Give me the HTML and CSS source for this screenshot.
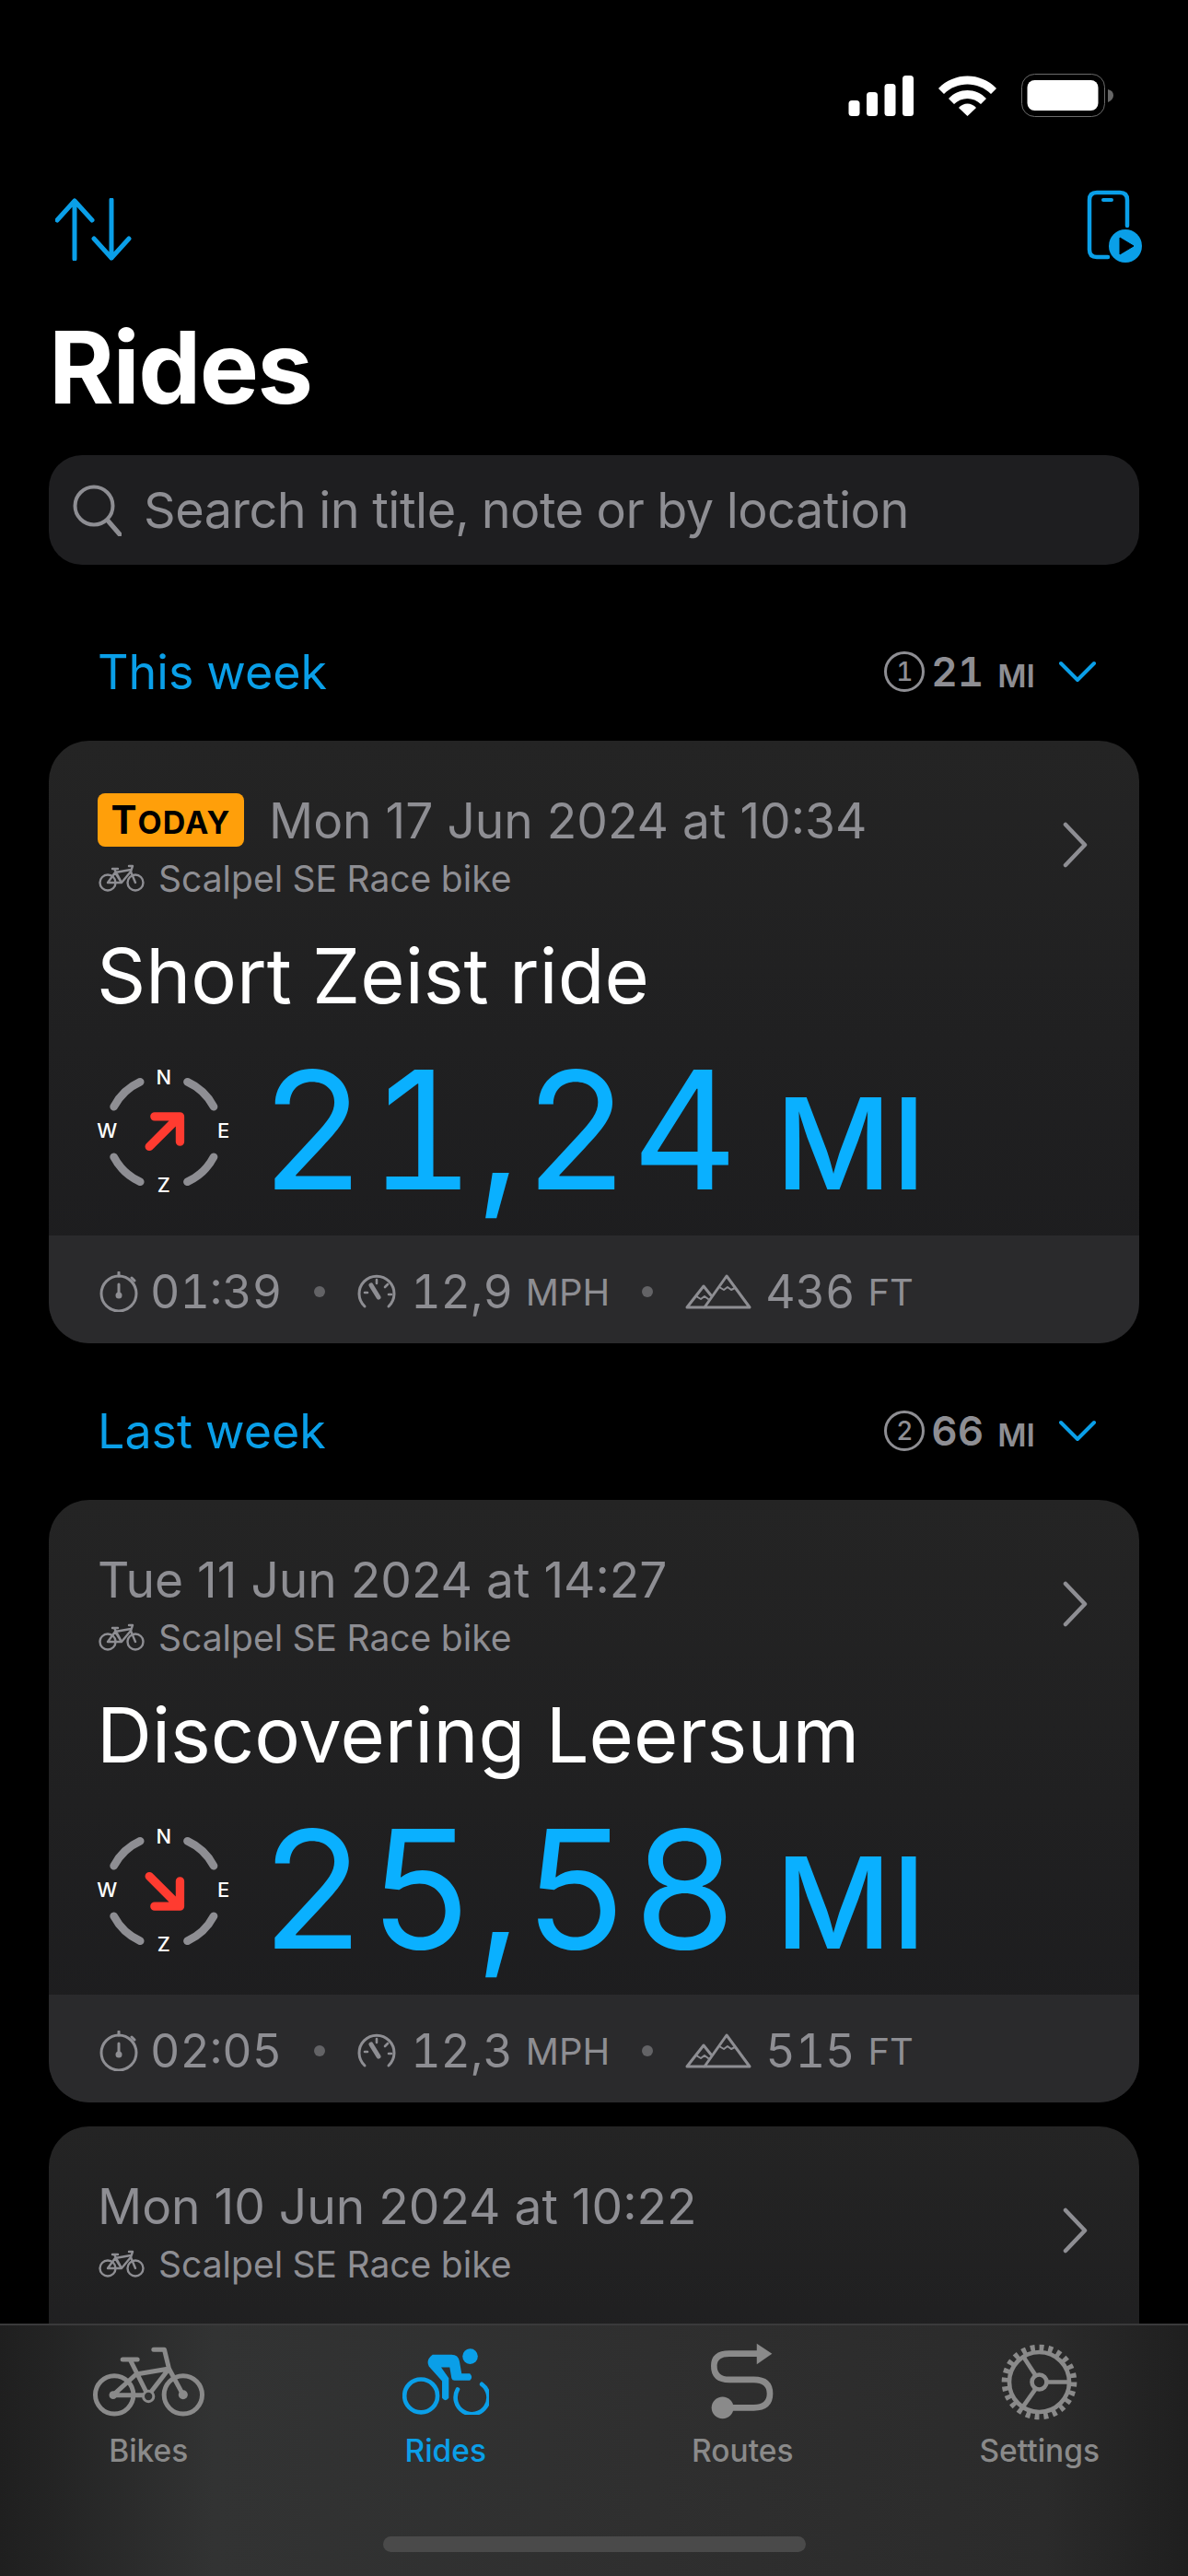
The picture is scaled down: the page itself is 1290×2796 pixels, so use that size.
FILE: index.html
```html
<!DOCTYPE html>
<html lang="en">
<head>
<meta charset="utf-8">
<title>Rides</title>
<link rel="stylesheet" href="styles.css">
</head>
<body>
<svg class="defs" width="0" height="0" aria-hidden="true">
  <defs>
    <symbol id="compass-ring" viewBox="190 70 460 440">
      <g fill="none" stroke="#8e8e93" stroke-width="26" stroke-linecap="round">
        <path d="M252 208A182 182 0 0 1 338 127"/>
        <path d="M492 127A182 182 0 0 1 578 208"/>
        <path d="M578 372A182 182 0 0 1 492 453"/>
        <path d="M338 453A182 182 0 0 1 252 372"/>
      </g>
    </symbol>
    <symbol id="small-bike" viewBox="0 0 50 30">
      <g fill="none" stroke="#8e8e93" stroke-width="2.4" stroke-linecap="round" stroke-linejoin="round">
        <circle cx="10" cy="20" r="8.5"/>
        <circle cx="40" cy="20" r="8.5"/>
        <path d="M10 20H25L35 8L40 20M10 20L18 9L25 20M18 9L35 6M15 5H21M17 5L25 20M33 2H37L35 8"/>
      </g>
    </symbol>
    <symbol id="stopwatch" viewBox="0 0 44 44">
      <g fill="none" stroke="#8e8e93" stroke-width="3" stroke-linecap="round">
        <circle cx="22" cy="24" r="19"/>
        <path d="M22 1V5M36 7L39 10M22 14V25"/>
      </g>
      <circle cx="22" cy="26" r="3.5" fill="#8e8e93"/>
    </symbol>
    <symbol id="gauge" viewBox="0 0 42 38">
      <g fill="none" stroke="#8e8e93" stroke-width="3" stroke-linecap="round">
        <path d="M8 35A19 19 0 1 1 34 35"/>
        <path d="M21 6V10M33 11L30 14M8 20H11M34 22H37" stroke-width="2.6"/>
        <path d="M15 12L23 25" stroke-width="5"/>
      </g>
    </symbol>
    <symbol id="peaks" viewBox="0 0 72 38">
      <g fill="none" stroke="#8e8e93" stroke-width="3" stroke-linejoin="round" stroke-linecap="round">
        <path d="M20 36H2L20 13L28 23"/>
        <path d="M21 36L45 2L70 36Z"/>
        <path d="M12 24L17 27L21 24L25 27M37 14L42 17L46 14L50 17L54 15" stroke-width="2"/>
      </g>
    </symbol>
    <symbol id="chev-right" viewBox="0 0 28 50">
      <path d="M3 3L24 25L3 47" fill="none" stroke="#8e8e93" stroke-width="4.5" stroke-linecap="round" stroke-linejoin="round"/>
    </symbol>
    <symbol id="chev-down" viewBox="0 0 40 24">
      <path d="M2 3L20 21L38 3" fill="none" stroke="#0a9fe8" stroke-width="4" stroke-linecap="round" stroke-linejoin="round"/>
    </symbol>
  </defs>
</svg>

<main class="screen">
  <div class="status">
    <svg class="sig" viewBox="0 0 70 44"><g fill="#fff"><rect x="0" y="27" width="12" height="17" rx="3.5"/><rect x="19.500" y="18" width="12" height="26" rx="3.500"/><rect x="39" y="9" width="12" height="35" rx="3.500"/><rect x="58.500" y="0" width="12" height="44" rx="3.500"/></g></svg>
    <svg class="wifi" viewBox="0 0 63 44"><g fill="#fff"><path d="M0 14C17-4 46-4 63 14L57 20C43 6 20 6 6 20Z"/><path d="M11 25C22 13 41 13 52 25L46 31C38 23 25 23 17 31Z"/><path d="M22 35C27 29 36 29 41 35L31.500 44Z"/></g></svg>
    <svg class="batt" viewBox="0 0 101 47"><rect x=".5" y=".5" width="90" height="46" rx="14" fill="none" stroke="#6b6b6b"/><rect x="6.500" y="7" width="77" height="33" rx="8" fill="#fff"/><path d="M94 17C98 18 100 20 100 23.500C100 27 98 29 94 31Z" fill="#666"/></svg>
  </div>

  <div class="nav">
    <svg class="sort" viewBox="0 0 83 68"><g fill="none" stroke="#0a9fe8" stroke-width="5" stroke-linecap="round" stroke-linejoin="round"><path d="M21 66V3M2 24L21 3L40 24"/><path d="M61 2V65M42 44L61 65L80 44"/></g></svg>
    <svg class="phone" viewBox="0 0 60 79"><path d="M23 73H11Q3 73 3 65V11Q3 3 11 3H36Q44 3 44 11V39" fill="none" stroke="#0a9fe8" stroke-width="4.500" stroke-linecap="round"/><rect x="16" y="9" width="13" height="4" rx="2" fill="#0a9fe8"/><circle cx="42" cy="61" r="18" fill="#0a9fe8"/><path d="M36 52L51 61L36 70Z" fill="#000" stroke="#000" stroke-width="1" stroke-linejoin="round"/></svg>
  </div>

  <h1 class="title">Rides</h1>

  <div class="search">
    <svg class="search-ico" viewBox="0 0 53 56"><circle cx="23" cy="23" r="20.500" fill="none" stroke="#8e8e93" stroke-width="4"/><path d="M38 39L51 54" stroke="#8e8e93" stroke-width="5" stroke-linecap="round"/></svg>
    <span>Search in title, note or by location</span>
  </div>

  <section class="group">
    <div class="group-head">
      <span class="group-name">This week</span>
      <div class="group-sum">
        <span class="count">1</span>
        <span class="sum-val">21</span><span class="sum-unit">MI</span>
        <svg class="chev-d"><use href="#chev-down"/></svg>
      </div>
    </div>
    <article class="card">
      <div class="card-main">
        <div class="card-top">
          <div class="card-meta">
            <div class="when"><span class="today">T<small>ODAY</small></span><span>Mon 17 Jun 2024 at 10:34</span></div>
            <div class="bike"><svg class="bike-ico"><use href="#small-bike"/></svg><span>Scalpel SE Race bike</span></div>
          </div>
          <svg class="chev-r"><use href="#chev-right"/></svg>
        </div>
        <h2 class="ride-name">Short Zeist ride</h2>
        <div class="dist-row">
          <svg class="compass" viewBox="190 70 460 440">
            <use href="#compass-ring" x="190" y="70" width="460" height="440"/>
            <g class="compass-l"><text x="415" y="134">N</text><text x="610" y="311">E</text><text x="415" y="488">Z</text><text x="230" y="311">W</text></g>
            <path class="arrow" d="M368 338L466 240M385 240H468V322"/>
          </svg>
          <span class="dist">21,24</span><span class="dist-unit">MI</span>
        </div>
      </div>
      <div class="stats">
        <svg class="ico-watch"><use href="#stopwatch"/></svg><span class="stat">01:39</span><i class="dot"></i>
        <svg class="ico-gauge"><use href="#gauge"/></svg><span class="stat">12,9</span><span class="unit">MPH</span><i class="dot"></i>
        <svg class="ico-peaks"><use href="#peaks"/></svg><span class="stat">436</span><span class="unit">FT</span>
      </div>
    </article>
  </section>

  <section class="group">
    <div class="group-head">
      <span class="group-name">Last week</span>
      <div class="group-sum">
        <span class="count">2</span>
        <span class="sum-val">66</span><span class="sum-unit">MI</span>
        <svg class="chev-d"><use href="#chev-down"/></svg>
      </div>
    </div>
    <article class="card">
      <div class="card-main">
        <div class="card-top">
          <div class="card-meta">
            <div class="when"><span>Tue 11 Jun 2024 at 14:27</span></div>
            <div class="bike"><svg class="bike-ico"><use href="#small-bike"/></svg><span>Scalpel SE Race bike</span></div>
          </div>
          <svg class="chev-r"><use href="#chev-right"/></svg>
        </div>
        <h2 class="ride-name">Discovering Leersum</h2>
        <div class="dist-row">
          <svg class="compass" viewBox="190 70 460 440">
            <use href="#compass-ring" x="190" y="70" width="460" height="440"/>
            <g class="compass-l"><text x="415" y="134">N</text><text x="610" y="311">E</text><text x="415" y="488">Z</text><text x="230" y="311">W</text></g>
            <path class="arrow" d="M368 242L466 340M385 340H468V258"/>
          </svg>
          <span class="dist">25,58</span><span class="dist-unit">MI</span>
        </div>
      </div>
      <div class="stats">
        <svg class="ico-watch"><use href="#stopwatch"/></svg><span class="stat">02:05</span><i class="dot"></i>
        <svg class="ico-gauge"><use href="#gauge"/></svg><span class="stat">12,3</span><span class="unit">MPH</span><i class="dot"></i>
        <svg class="ico-peaks"><use href="#peaks"/></svg><span class="stat">515</span><span class="unit">FT</span>
      </div>
    </article>
    <article class="card card-next">
      <div class="card-main">
        <div class="card-top">
          <div class="card-meta">
            <div class="when"><span>Mon 10 Jun 2024 at 10:22</span></div>
            <div class="bike"><svg class="bike-ico"><use href="#small-bike"/></svg><span>Scalpel SE Race bike</span></div>
          </div>
          <svg class="chev-r"><use href="#chev-right"/></svg>
        </div>
      </div>
    </article>
  </section>

  <nav class="tabbar">
    <div class="tabs">
      <div class="tab">
        <svg class="tab-ico ico-bikes" viewBox="115 50 368 228"><g fill="none" stroke="#8a8a8a" stroke-width="15" stroke-linecap="round" stroke-linejoin="round"><circle cx="187" cy="207" r="62"/><circle cx="411" cy="207" r="62"/><path d="M183 208H298L365 122L411 207M183 208L258 140M258 140L365 122M238 92L298 212M365 122L350 60H315M214 92H262"/></g><circle cx="298" cy="212" r="17" fill="#303131" stroke="#8a8a8a" stroke-width="9"/><circle cx="183" cy="208" r="13" fill="#8a8a8a"/><circle cx="411" cy="207" r="15" fill="#8a8a8a"/></svg>
        <span>Bikes</span>
      </div>
      <div class="tab tab-on">
        <svg class="tab-ico ico-rides" viewBox="1130 50 282 220"><g fill="none" stroke="#0a9fe8" stroke-width="14" stroke-linecap="round"><circle cx="1190" cy="208" r="54"/><path d="M1310 187A54 54 0 1 0 1389 170"/></g><circle cx="1351" cy="79" r="25" fill="#0a9fe8"/><path fill="#0a9fe8" d="M1228 73L1290 73Q1312 73 1316 95L1323 135L1350 135Q1362 147 1350 158L1300 158Q1292 158 1290 150L1284 115L1256 115L1281 150L1281 215Q1270 230 1259 215L1259 160L1216 112Q1205 90 1228 73Z"/></svg>
        <span>Rides</span>
      </div>
      <div class="tab">
        <svg class="tab-ico ico-routes" viewBox="155 40 205 250"><path d="M315 75H215Q165 75 165 115Q165 160 215 160H295Q348 160 348 206Q348 252 295 252H195" fill="none" stroke="#8a8a8a" stroke-width="20"/><path d="M305 42L355 75L305 110Z" fill="#8a8a8a"/><circle cx="193" cy="252" r="36" fill="#8a8a8a"/></svg>
        <span>Routes</span>
      </div>
      <div class="tab">
        <svg class="tab-ico ico-settings" viewBox="1100 38 250 254"><g fill="none" stroke="#8a8a8a"><circle cx="1225" cy="165" r="98" stroke-width="14"/><circle cx="1225" cy="165" r="110" stroke-width="26" pathLength="48" stroke-dasharray="1 1"/><circle cx="1225" cy="165" r="24" stroke-width="14"/><path stroke-width="14" d="M1249 165H1325M1213 143L1175 85M1213 187L1170 248"/></g></svg>
        <span>Settings</span>
      </div>
    </div>
    <div class="home-bar"></div>
  </nav>
</main>
</body>
</html>
```

FILE: styles.css
```css
* { box-sizing: border-box; }
html, body { margin: 0; padding: 0; background: #000; }
.defs { position: absolute; }
.screen {
  position: relative;
  width: 1290px;
  height: 2796px;
  overflow: hidden;
  background: #000;
  font-family: Inter, "Liberation Sans", sans-serif;
  font-variant-numeric: tabular-nums;
  color: #8e8e93;
}
.status {
  display: flex;
  justify-content: flex-end;
  align-items: flex-start;
  height: 127px;
  padding: 80px 80px 0 0;
}
.sig { width: 71px; height: 44px; margin: 2px 27px 0 0; }
.wifi { width: 63px; height: 44px; margin: 2px 27px 0 0; }
.batt { width: 101px; height: 47px; }
.nav {
  display: flex;
  justify-content: space-between;
  align-items: flex-start;
  height: 79px;
  margin-top: 79px;
  padding: 0 50px 0 60px;
}
.sort { width: 83px; height: 68px; margin-top: 9px; }
.phone { width: 60px; height: 79px; }
.title {
  margin: 0;
  height: 207px;
  padding: 64px 0 0 53px;
  color: #fff;
  font-size: 108px;
  font-weight: 700;
  line-height: 100px;
  letter-spacing: -1.5px;
}
.search {
  display: flex;
  align-items: center;
  gap: 24px;
  height: 119px;
  margin: 2px 53px 66px;
  padding: 0 26px;
  border-radius: 36px;
  background: #1e1e20;
  font-size: 54px;
  letter-spacing: -0.5px;
}
.search-ico { width: 53px; height: 56px; flex: none; }
.group-head {
  display: flex;
  justify-content: space-between;
  align-items: center;
  height: 100px;
  margin: 45px 100px 25px 106px;
}
.group-name { color: #0a9fe8; font-size: 52px; }
.group-sum { display: flex; align-items: center; }
.count {
  display: flex;
  justify-content: center;
  align-items: center;
  width: 44px;
  height: 44px;
  margin-right: 7px;
  border: 3.500px solid #8e8e93;
  border-radius: 50%;
  font-size: 28px;
  font-weight: 500;
}
.sum-val { font-size: 44px; font-weight: 600; margin-right: 15px; }
.sum-unit { font-size: 34px; font-weight: 600; margin-top: 8px; }
.chev-d { width: 40px; height: 24px; margin-left: 26px; }
.card {
  margin: 0 53px;
  border-radius: 44px;
  overflow: hidden;
  background: linear-gradient(#242424, #1c1c1e);
}
.card-next { margin-top: 26px; height: 400px; }
.card-main { height: 537px; padding: 57px 54px 0 53px; }
.card-top { display: flex; justify-content: space-between; align-items: center; padding-right: 1px; }
.when {
  display: flex;
  align-items: center;
  gap: 27px;
  height: 58px;
  font-size: 53.300px;
  font-variant-numeric: normal;
}
.today {
  display: flex;
  align-items: baseline;
  justify-content: center;
  width: 159px;
  height: 58px;
  padding-top: 7px;
  border-radius: 8px;
  background: #ff9f0a;
  color: #000;
  font-size: 42px;
  font-weight: 700;
  line-height: 44px;
  letter-spacing: 1px;
}
.today small { font-size: 34px; }
.bike {
  display: flex;
  align-items: center;
  gap: 15px;
  height: 40px;
  margin-top: 14px;
  padding-left: 1px;
  font-size: 39px;
}
.bike-ico { width: 50px; height: 30px; }
.chev-r { width: 28px; height: 50px; }
.ride-name {
  margin: 34px 0 0 -1px;
  color: #fff;
  font-size: 83px;
  font-weight: 400;
  line-height: 104px;
}
.dist-row { display: flex; align-items: baseline; margin-top: 21px; }
.compass { width: 153px; height: 147px; margin: 0 26px 0 -3px; align-self: center; flex: none; }
.compass-l text { fill: #fff; font-size: 66px; font-weight: 500; text-anchor: middle; }
.arrow { fill: none; stroke: #ff3b30; stroke-width: 28; stroke-linecap: round; stroke-linejoin: round; }
.dist { color: #0ab0ff; font-size: 178px; font-weight: 400; line-height: 190px; letter-spacing: 2.500px; }
.dist-unit { margin-left: 38px; color: #0ab0ff; font-size: 138px; font-weight: 500; }
.stats {
  display: flex;
  align-items: center;
  height: 117px;
  padding: 5px 54px 0;
  background: #2a2a2c;
  font-size: 50px;
}
.ico-watch { width: 44px; height: 44px; margin-right: 12px; }
.ico-gauge { width: 42px; height: 38px; margin-right: 16px; }
.ico-peaks { width: 72px; height: 38px; margin-right: 15px; }
.unit { margin-left: 14px; font-size: 40px; }
.dot { width: 12px; height: 12px; margin: 0 35px; border-radius: 50%; background: #636366; }
.tabbar {
  position: absolute;
  left: 0;
  right: 0;
  top: 2522px;
  height: 274px;
  border-top: 2px solid #3a3a3b;
  background: linear-gradient(90deg, #1f1f1f, #323333 18%, #2f2f2f 55%, #2b2b2b 88%, #1f1f1f);
}
.tabs { display: grid; grid-template-columns: repeat(4, 1fr); height: 229px; }
.tab {
  display: flex;
  flex-direction: column;
  align-items: center;
  height: 170px;
  color: #8a8a8a;
  font-size: 33.500px;
  font-weight: 500;
}
.tab span { position: absolute; top: 116px; }
.tab-ico { margin-top: 19px; }
.ico-bikes { width: 123px; height: 76px; margin-top: 23px; }
.ico-rides { width: 94px; height: 73px; margin-top: 24px; }
.ico-routes { width: 68px; height: 83px; }
.ico-settings { width: 83px; height: 85px; }
.tab-on { color: #0a9fe8; }
.home-bar { width: 459px; height: 17px; margin: 0 auto; border-radius: 9px; background: #4a4a4a; }
```
